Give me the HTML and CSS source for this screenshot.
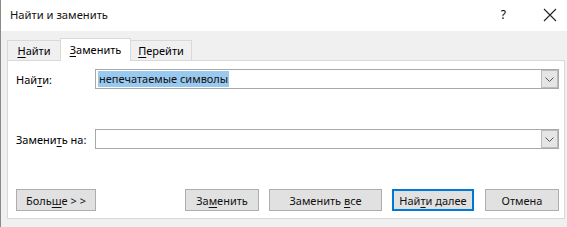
FILE: index.html
```html
<!DOCTYPE html>
<html lang="ru">
<head>
<meta charset="utf-8">
<link rel="stylesheet" href="styles.css">
</head>
<body>
<div class="window">
  <div class="titlebar">
    <span class="title">Найти и заменить</span>
    <span class="help">?</span>
    <svg class="close" width="14" height="14" viewBox="0 0 14 14"><path d="M1 1 L13 13 M13 1 L1 13" stroke="#222" stroke-width="1.1" fill="none"/></svg>
  </div>
  <div class="body">
    <div class="tabs">
      <div class="tab t1"><u>Н</u>айти</div>
      <div class="tab active"><u>З</u>аменить</div>
      <div class="tab t3"><u>П</u>ерейти</div>
    </div>
    <div class="panel">
      <div class="row">
        <label class="lbl">Най<u>т</u>и:</label>
        <div class="combo">
          <span class="value"><span class="sel">непечатаемые символы</span></span>
          <span class="drop"><svg width="9" height="5" viewBox="0 0 9 5"><path d="M0.5 0.5 L4.5 4.5 L8.5 0.5" stroke="#555" fill="none"/></svg></span>
        </div>
      </div>
      <div class="row row2">
        <label class="lbl">Замени<u>т</u>ь на:</label>
        <div class="combo">
          <span class="value"></span>
          <span class="drop"><svg width="9" height="5" viewBox="0 0 9 5"><path d="M0.5 0.5 L4.5 4.5 L8.5 0.5" stroke="#555" fill="none"/></svg></span>
        </div>
      </div>
      <div class="buttons">
        <button class="btn more">Боль<u>ш</u>е &gt; &gt;</button>
        <div class="spacer"></div>
        <button class="btn b-rep">За<u>м</u>енить</button>
        <button class="btn b-all">Заменить <u>в</u>се</button>
        <button class="btn b-next def">Най<u>т</u>и далее</button>
        <button class="btn b-cancel">Отмена</button>
      </div>
    </div>
  </div>
</div>
</body>
</html>
```
FILE: styles.css
```css
* { box-sizing: border-box; }
html, body { margin: 0; padding: 0; }
body {
  width: 567px; height: 227px; overflow: hidden;
  font-family: "Noto Sans", "Open Sans", sans-serif;
  font-size: 11px; color: #000;
  background: #f0f0f0;
}
.window {
  width: 567px; height: 227px;
  border-left: 1px solid #8a8a8a;
  display: flex; flex-direction: column;
}
u { text-decoration: underline; text-underline-offset: 2px; }
.titlebar {
  height: 31px; background: #fff;
  display: flex; align-items: center;
  padding-left: 9px;
}
.title { font-size: 11.2px; flex: 1; padding-bottom: 2px; color: #111; }
.help { font-size: 12px; margin-right: 37px; padding-bottom: 2px; }
.close { margin-right: 10px; margin-bottom: 1px; }
.body { flex: 1; padding: 6px 2px 0 6px; }
.tabs { display: flex; align-items: flex-end; height: 23px; }
.tab {
  height: 20px; padding: 0 0 0 0;
  border: 1px solid #d9d9d9; border-bottom: none;
  display: flex; align-items: center; justify-content: center;
  background: #f0f0f0;
}
.t1 { width: 53px; border-right: none; }
.t3 { width: 61px; border-left: none; }
.tab.active {
  height: 23px; width: 71px;
  background: #fff; margin-bottom: -1px; position: relative; z-index: 1;
  padding-bottom: 2px;
}
.panel {
  height: 159px;
  background: #fff; border: 1px solid #d9d9d9;
  padding: 8px 5px 0 8px;
  display: flex; flex-direction: column;
}
.row { display: flex; align-items: center; height: 20px; }
.row2 { margin-top: 40px; }
.lbl { width: 79px; }
.combo {
  flex: 1; height: 20px;
  border: 1px solid #a8a8a8;
  display: flex; align-items: center;
  padding: 1px;
}
.value { flex: 1; padding-left: 1px; height: 16px; display: flex; align-items: center; }
.sel { background: #99c9ef; line-height: 16px; height: 16px; padding: 0 1px; color: #111; }
.drop {
  width: 17px; height: 18px;
  background: #e5e5e5; border: 1px solid #bcbcbc;
  display: flex; align-items: center; justify-content: center;
  margin-right: -1px;
}
.buttons { display: flex; margin-top: 40px; height: 22px; }
.spacer { flex: 1; }
.btn {
  font-family: inherit; font-size: 11px; color: #111;
  height: 22px; padding: 0;
  background: #e1e1e1; border: 1px solid #adadad;
}
.more { width: 80px; }
.b-rep { width: 74px; }
.b-all { width: 113px; margin-left: 10px; }
.b-next { width: 82px; margin-left: 10px; }
.b-cancel { width: 74px; margin-left: 11px; }
.def { border: 2px solid #0078d7; }
```
